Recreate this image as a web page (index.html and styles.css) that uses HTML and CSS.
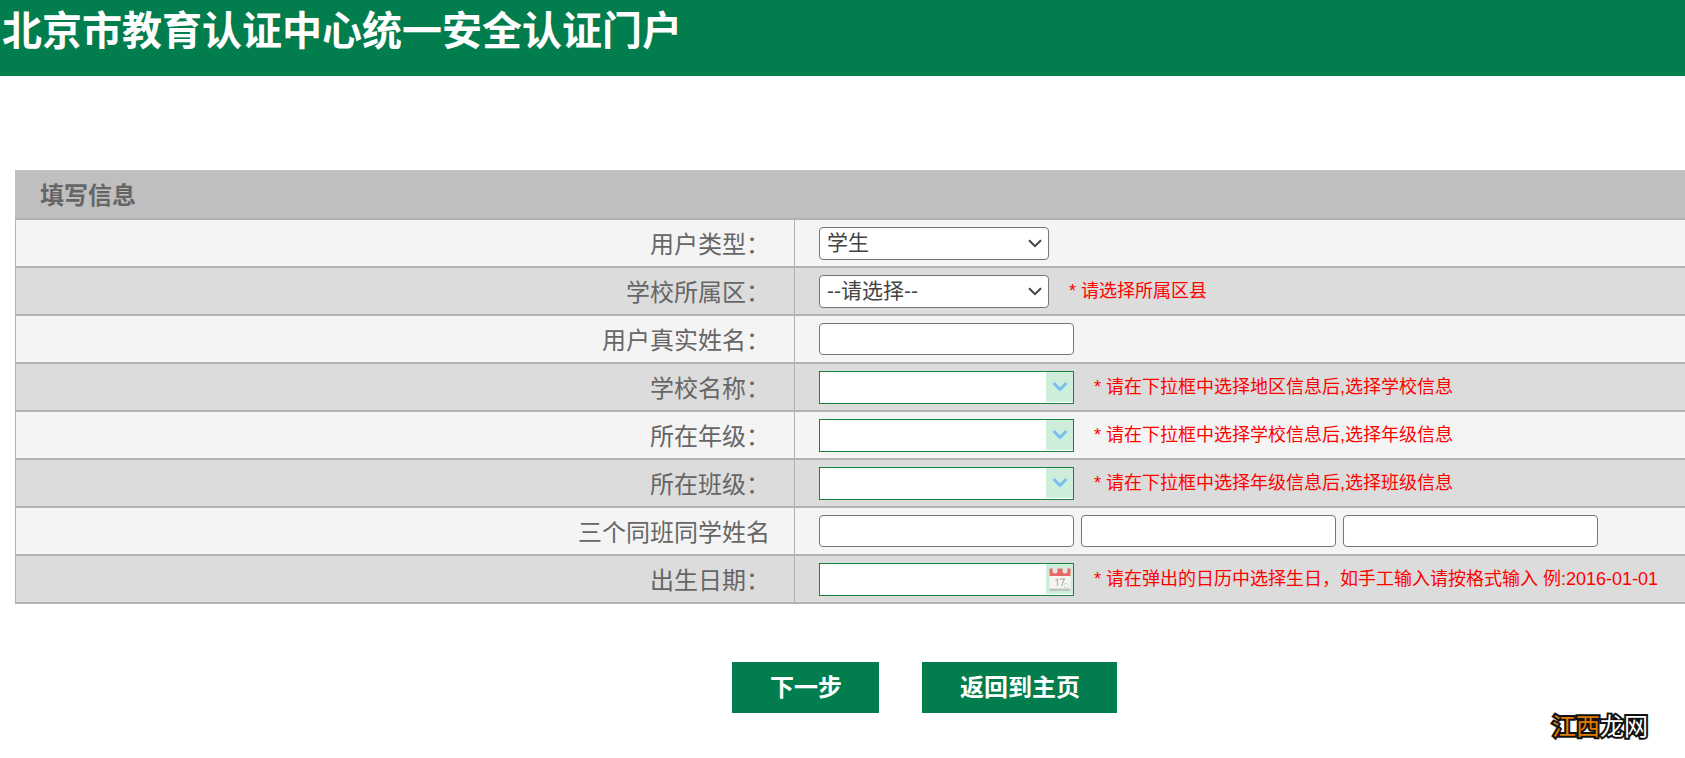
FILE: index.html
```html
<!DOCTYPE html>
<html lang="zh-CN">
<head>
<meta charset="utf-8">
<title>北京市教育认证中心统一安全认证门户</title>
<link rel="stylesheet" href="styles.css">
</head>
<body>
<header class="banner"><h1 class="banner-title">北京市教育认证中心统一安全认证门户</h1></header>
<main>
<form class="info-form">
<table class="info-table">
<colgroup><col class="label-column"><col></colgroup>
<thead>
<tr><th class="info-title" colspan="2">填写信息</th></tr>
</thead>
<tbody>
<tr>
<th class="label" scope="row"><label for="user-type">用户类型：</label></th>
<td class="value"><div class="fields">
<span class="select-box"><select class="select" id="user-type"><option>学生</option></select><svg class="select-arrow" viewBox="0 0 14 9" aria-hidden="true"><path d="M1 1.2 7 7.2 13 1.2"/></svg></span>
</div></td>
</tr>
<tr>
<th class="label" scope="row"><label for="district">学校所属区：</label></th>
<td class="value"><div class="fields">
<span class="select-box"><select class="select" id="district"><option>--请选择--</option></select><svg class="select-arrow" viewBox="0 0 14 9" aria-hidden="true"><path d="M1 1.2 7 7.2 13 1.2"/></svg></span>
<span class="hint">* 请选择所属区县</span>
</div></td>
</tr>
<tr>
<th class="label" scope="row"><label for="real-name">用户真实姓名：</label></th>
<td class="value"><div class="fields"><input class="text" id="real-name" type="text"></div></td>
</tr>
<tr>
<th class="label" scope="row"><label for="school">学校名称：</label></th>
<td class="value"><div class="fields">
<span class="combo"><input class="combo-input" id="school" type="text"><button class="combo-button" type="button" aria-label="选择学校"><svg class="chevron" viewBox="0 0 16 11" aria-hidden="true"><path d="M1.500 2 8 8.500 14.500 2"/></svg></button></span>
<span class="hint">* 请在下拉框中选择地区信息后,选择学校信息</span>
</div></td>
</tr>
<tr>
<th class="label" scope="row"><label for="grade">所在年级：</label></th>
<td class="value"><div class="fields">
<span class="combo"><input class="combo-input" id="grade" type="text"><button class="combo-button" type="button" aria-label="选择年级"><svg class="chevron" viewBox="0 0 16 11" aria-hidden="true"><path d="M1.500 2 8 8.500 14.500 2"/></svg></button></span>
<span class="hint">* 请在下拉框中选择学校信息后,选择年级信息</span>
</div></td>
</tr>
<tr>
<th class="label" scope="row"><label for="class">所在班级：</label></th>
<td class="value"><div class="fields">
<span class="combo"><input class="combo-input" id="class" type="text"><button class="combo-button" type="button" aria-label="选择班级"><svg class="chevron" viewBox="0 0 16 11" aria-hidden="true"><path d="M1.500 2 8 8.500 14.500 2"/></svg></button></span>
<span class="hint">* 请在下拉框中选择年级信息后,选择班级信息</span>
</div></td>
</tr>
<tr>
<th class="label" scope="row"><label for="classmate-1">三个同班同学姓名</label></th>
<td class="value"><div class="fields mates">
<input class="text" id="classmate-1" type="text">
<input class="text" type="text" aria-label="第二个同学姓名">
<input class="text" type="text" aria-label="第三个同学姓名">
</div></td>
</tr>
<tr>
<th class="label" scope="row"><label for="birthday">出生日期：</label></th>
<td class="value"><div class="fields">
<span class="combo"><input class="combo-input" id="birthday" type="text"><button class="combo-button" type="button" aria-label="打开日历"><svg class="calendar" viewBox="0 0 24 26" aria-hidden="true">
<path d="M1.500 8h21v16h-21z" fill="#f5f5f3"/>
<path d="M1.500 22.500h21V25h-21z" fill="#bfc4c0"/>
<path d="M1.500 2.500h21V10h-21z" fill="#e86868"/>
<rect x="4.500" y="1" width="5" height="6.500" rx="2" fill="#e4e4e2"/>
<rect x="14.500" y="1" width="5" height="6.500" rx="2" fill="#e4e4e2"/>
<path d="M7.500 14.500 9.500 13v7M12 13h4.500l-3 7" fill="none" stroke="#b9b9b9" stroke-width="1.300"/>
<circle cx="18" cy="19.500" r="2" fill="#fff" stroke="#d2d2d2"/>
</svg></button></span>
<span class="hint">* 请在弹出的日历中选择生日，如手工输入请按格式输入 例:2016-01-01</span>
</div></td>
</tr>
</tbody>
</table>
<div class="actions">
<button class="action" type="submit">下一步</button>
<button class="action" type="button">返回到主页</button>
</div>
</form>
</main>
<footer class="mark"><span class="mark-accent">江西</span>龙网</footer>
</body>
</html>
```
FILE: styles.css
```css
* { box-sizing: border-box; }

body {
  margin: 0;
  background: #fff;
  color: #666;
  font-family: "Liberation Sans", "Noto Sans CJK SC", sans-serif;
}

.banner {
  height: 76px;
  padding-left: 2px;
  background: #027d4d;
}

.banner-title {
  margin: 0;
  color: #fff;
  font-size: 40px;
  font-weight: 700;
  line-height: 62px;
  white-space: nowrap;
}

.info-form { padding: 94px 0 0 15px; }

.info-table {
  width: 100%;
  table-layout: fixed;
  border-collapse: separate;
  border-spacing: 0;
}

.label-column { width: 46.65%; }

.info-title {
  height: 50px;
  padding: 4px 25px 0;
  border-bottom: 2px solid #b3b3b3;
  background: #bfbfbf;
  font-size: 24px;
  line-height: 32px;
  text-align: left;
  white-space: nowrap;
}

.label,
.value {
  height: 48px;
  padding: 0 24px;
  border-left: 1px solid #b3b3b3;
  border-bottom: 2px solid #b3b3b3;
  background: #f4f4f4;
  vertical-align: middle;
}

.info-table tbody tr:nth-child(even) > * { background: #dcdcdc; }

.label {
  padding-top: 4px;
  font-size: 24px;
  font-weight: 400;
  line-height: 32px;
  text-align: right;
  white-space: nowrap;
}

.value { padding-right: 0; }

.fields {
  display: flex;
  align-items: center;
  gap: 20px;
}

.mates { gap: 7px; }

.select-box {
  position: relative;
  flex: none;
  width: 230px;
}

.select {
  display: block;
  width: 100%;
  height: 33px;
  padding: 0 30px 0 7px;
  border: 1px solid #767676;
  border-radius: 4px;
  appearance: none;
  background: #fff;
  color: #444;
  font: 21px/30px "Liberation Sans", "Noto Sans CJK SC", sans-serif;
}

.select-arrow {
  position: absolute;
  top: 12px;
  right: 7px;
  width: 14px;
  height: 9px;
  fill: none;
  stroke: #444;
  stroke-width: 2;
  pointer-events: none;
}

.text {
  flex: none;
  width: 255px;
  height: 32px;
  padding: 0 7px;
  border: 1px solid #767676;
  border-radius: 4px;
  background: #fff;
  font-size: 20px;
}

.combo {
  display: flex;
  flex: none;
  width: 255px;
  height: 33px;
  padding-bottom: 1px;
  border: 1px solid #1a7f42;
  background: #fff;
}

.combo-input {
  flex: 1;
  min-width: 0;
  padding: 0 7px;
  border: 0;
  background: #fff;
  font-size: 20px;
}

.combo-button {
  display: flex;
  align-items: center;
  justify-content: center;
  width: 27px;
  padding: 0;
  border: 0;
  background: #cceedb;
}

.chevron {
  width: 16px;
  height: 11px;
  fill: none;
  stroke: #79bff2;
  stroke-width: 3;
}

.calendar {
  width: 24px;
  height: 26px;
}

.hint {
  color: #f00;
  font-size: 18px;
  line-height: 24px;
  white-space: nowrap;
}

.actions {
  display: flex;
  justify-content: center;
  gap: 43px;
  padding: 58px 0 0 149px;
}

.action {
  height: 51px;
  padding: 0 37px 0 38px;
  border: 0;
  background: #027d4d;
  color: #fff;
  font: 700 24px/48px "Liberation Sans", "Noto Sans CJK SC", sans-serif;
}

.mark {
  padding-right: 37px;
  color: #fff;
  font-size: 24px;
  line-height: 28px;
  text-align: right;
  paint-order: stroke fill;
  -webkit-text-stroke: 4px #111;
}

.mark-accent { color: #e07b00; }
```
